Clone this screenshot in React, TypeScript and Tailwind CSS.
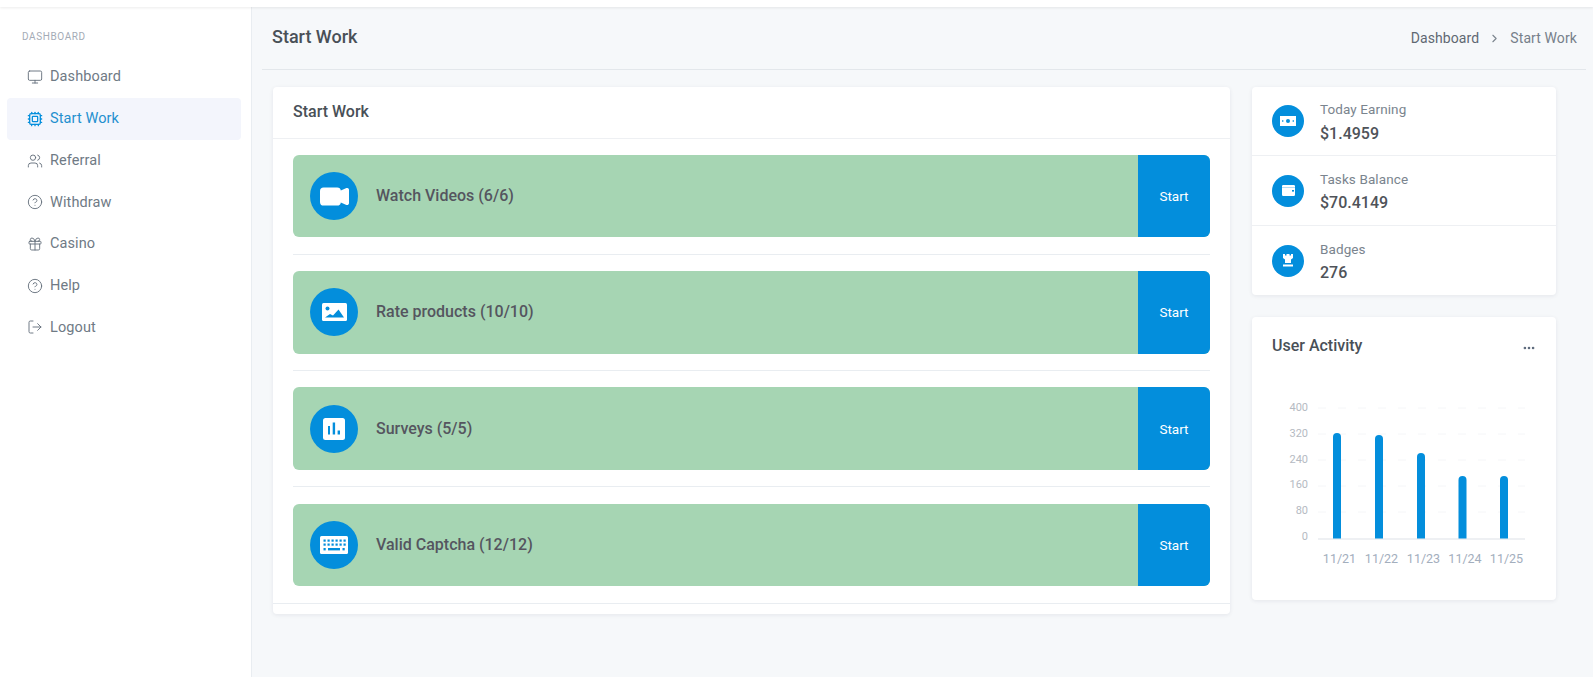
import React from 'react';
import { Monitor, Cpu, Users, CircleHelp, Gift, LogOut, ChevronRight, Ellipsis } from 'lucide-react';
import { BsCameraVideoFill } from 'react-icons/bs';

const BLUE = '#038edc';

const navItems = [
  { label: 'Dashboard', icon: Monitor },
  { label: 'Start Work', icon: Cpu, active: true },
  { label: 'Referral', icon: Users },
  { label: 'Withdraw', icon: CircleHelp },
  { label: 'Casino', icon: Gift },
  { label: 'Help', icon: CircleHelp },
  { label: 'Logout', icon: LogOut },
];

const ImageIcon = () => (
  <svg width="25" height="18" viewBox="0 0 25 18">
    <rect width="25" height="18" rx="1.5" fill="#fff" />
    <circle cx="5.5" cy="5.5" r="2" fill={BLUE} />
    <path d="M3 14.5l5-3.5 3 1.5 5.5-6 5.5 8z" fill={BLUE} />
  </svg>
);

const SurveyIcon = () => (
  <svg width="22" height="22" viewBox="0 0 22 22">
    <rect width="22" height="22" rx="2.5" fill="#fff" />
    <rect x="5" y="8" width="2" height="8.5" fill={BLUE} />
    <rect x="9.7" y="4.5" width="2.4" height="12" fill={BLUE} />
    <rect x="14.6" y="12.5" width="2.4" height="4" fill={BLUE} />
  </svg>
);

const KeyboardIcon = () => (
  <svg width="28" height="18" viewBox="0 0 28 18">
    <rect width="28" height="18" rx="1.5" fill="#fff" />
    {[3.5, 7.5].flatMap((y) =>
      [4, 8, 12, 16, 20, 24].map((x) => (
        <rect key={`${y}-${x}`} x={x - 0.5} y={y} width="2.2" height="2.2" fill={BLUE} />
      )),
    )}
    <rect x="3.5" y="12" width="2.2" height="2.4" fill={BLUE} />
    <rect x="8" y="12" width="12" height="2.4" fill={BLUE} />
    <rect x="22.5" y="12" width="2.2" height="2.4" fill={BLUE} />
  </svg>
);

const CashIcon = () => (
  <svg width="16" height="10" viewBox="0 0 16 10">
    <rect width="16" height="10" fill="#fff" />
    <circle cx="8" cy="5" r="2" fill={BLUE} />
    <rect x="2" y="4.3" width="1.4" height="1.4" fill={BLUE} />
    <rect x="12.6" y="4.3" width="1.4" height="1.4" fill={BLUE} />
  </svg>
);

const WalletIcon = () => (
  <svg width="13" height="11" viewBox="0 0 13 11">
    <path d="M1.2 0H11.8a1.2 1.2 0 0 1 1.2 1.2V9.8a1.2 1.2 0 0 1-1.2 1.2H1.2A1.2 1.2 0 0 1 0 9.8V1.2A1.2 1.2 0 0 1 1.2 0z" fill="#fff" />
    <rect x="0" y="2" width="13" height="0.6" fill={BLUE} opacity="0.5" />
    <rect x="10" y="5" width="2" height="1.6" fill={BLUE} />
  </svg>
);

const RookIcon = () => (
  <svg width="12" height="13" viewBox="0 0 12 13">
    <path d="M1 0h2v1.5h1.5V0h3v1.5H9V0h2v4L9 5.5V9H3V5.5L1 4z" fill="#fff" />
    <rect x="1" y="10.5" width="10" height="2" fill="#fff" />
  </svg>
);

const tasks = [
  { label: 'Watch Videos (6/6)', icon: <BsCameraVideoFill size={29} /> },
  { label: 'Rate products (10/10)', icon: <ImageIcon /> },
  { label: 'Surveys (5/5)', icon: <SurveyIcon /> },
  { label: 'Valid Captcha (12/12)', icon: <KeyboardIcon /> },
];

const stats = [
  { label: 'Today Earning', value: '$1.4959', icon: <CashIcon />, h: 'h-[68px]' },
  { label: 'Tasks Balance', value: '$70.4149', icon: <WalletIcon />, h: 'h-[70px]' },
  { label: 'Badges', value: '276', icon: <RookIcon />, h: 'h-[70px]' },
];

const Sidebar = () => (
  <aside className="w-[252px] shrink-0 bg-white border-r border-[#e9edf1] pt-[23px]">
    <div className="pl-[22px] text-[10px] leading-[13px] tracking-[0.6px] text-[#a4abb6] uppercase">Dashboard</div>
    <nav className="mt-[13.5px] flex flex-col">
      {navItems.map((item) => (
        <a
          key={item.label}
          className={`mx-[7px] w-[234px] h-[41.7px] pl-[20px] flex items-center gap-[7px] rounded text-[14.5px] tracking-[0.1px] ${
            item.active ? 'bg-[#f3f5fc] text-[#2390cf]' : 'text-[#6f7a85]'
          }`}
        >
          <item.icon
            size={16}
            strokeWidth={item.active ? 1.9 : 1.4}
            className={item.active ? 'text-[#038edc]' : 'text-[#66717d]'}
          />
          {item.label}
        </a>
      ))}
    </nav>
  </aside>
);

const TaskRow = ({ label, icon, last }: { label: string; icon: React.ReactNode; last: boolean }) => (
  <div className={last ? 'border-b border-[#e9edf1] py-[16.4px] px-[20px]' : 'border-b border-[#e9edf1] py-[16.4px] mx-[20px]'}>
    <div className="h-[82.5px] flex rounded-md overflow-hidden bg-[#a6d5b3]">
      <div className="flex-1 flex items-center pl-[17px]">
        <div className="w-[48px] h-[48px] rounded-full bg-[#038edc] text-white flex items-center justify-center">
          {icon}
        </div>
        <span className="ml-[18px] text-[16px] font-medium text-[#55555f]">{label}</span>
      </div>
      <div className="w-[72px] bg-[#038edc] text-white text-[13.5px] flex items-center justify-center">Start</div>
    </div>
  </div>
);

const ActivityChart = () => {
  const bars = [
    { x: 85, top: 117, label: '11/21' },
    { x: 127, top: 119, label: '11/22' },
    { x: 169, top: 137, label: '11/23' },
    { x: 210.5, top: 160, label: '11/24' },
    { x: 252, top: 160, label: '11/25' },
  ];
  const yTicks = ['400', '320', '240', '160', '80', '0'];
  return (
    <svg width="300" height="200" viewBox="0 80 300 200" className="block">
      {[92, 118, 144, 170, 196].map((y) => (
        <line key={y} x1="66" x2="273" y1={y} y2={y} stroke="#f5f6f8" strokeDasharray="8 12" />
      ))}
      <line x1="66" x2="273" y1="223" y2="223" stroke="#e9ebef" strokeWidth="1.5" />
      {yTicks.map((t, i) => (
        <text key={t} x="56" y={95 + i * 25.8} textAnchor="end" fontSize="11" fill="#b5bac2" fontFamily="Roboto, sans-serif">
          {t}
        </text>
      ))}
      {bars.map((b) => (
        <g key={b.label}>
          <path d={`M${b.x - 4} 222.5V${b.top + 4}a4 4 0 0 1 8 0V222.5z`} fill={BLUE} />
          <text x={b.x + 2.5} y="247" textAnchor="middle" fontSize="12.5" fill="#a3aebd" fontFamily="Roboto, sans-serif">
            {b.label}
          </text>
        </g>
      ))}
    </svg>
  );
};

export default function App() {
  return (
    <div className="h-screen overflow-hidden flex flex-col bg-[#f6f8fa] font-['Roboto',sans-serif]">
      <div className="h-[7px] shrink-0 bg-white shadow-[0_1px_3px_rgba(0,0,0,0.08)] relative z-10" />
      <div className="flex-1 flex min-h-0">
        <Sidebar />
        <main className="flex-1 min-w-0">
          {/* Page title */}
          <div className="ml-[10px] mr-[7px] h-[63px] border-b border-[#e3e7eb] pl-[10px] pr-[9px] flex items-center justify-between">
            <h1 className="text-[18px] font-medium text-[#495057] mb-[4px]">Start Work</h1>
            <div className="flex items-center text-[14px] tracking-[0.1px] text-[#5f6872]">
              <span>Dashboard</span>
              <ChevronRight size={13} className="mx-[9px] text-[#7b848d]" />
              <span className="text-[#76808a]">Start Work</span>
            </div>
          </div>

          <div className="pl-[21px] pt-[17px] flex items-start">
            <section className="w-[957px] h-[527px] bg-white rounded shadow-[0_1px_4px_rgba(20,30,60,0.08)]">
              <div className="h-[51.5px] border-b border-[#eef0f3] px-[20px] flex items-center text-[16px] font-medium text-[#495057]">
                Start Work
              </div>
              {tasks.map((t, i) => (
                <TaskRow key={t.label} label={t.label} icon={t.icon} last={i === tasks.length - 1} />
              ))}
            </section>

            <div className="ml-[22px] w-[304px] flex flex-col gap-[22px]">
              <section className="bg-white rounded shadow-[0_1px_4px_rgba(20,30,60,0.08)]">
                {stats.map((s, i) => (
                  <div
                    key={s.label}
                    className={`${s.h} px-[20px] flex items-center ${i > 0 ? 'border-t border-[#eef0f3]' : ''}`}
                  >
                    <div className="w-[32px] h-[32px] rounded-full bg-[#038edc] text-white flex items-center justify-center">
                      {s.icon}
                    </div>
                    <div className="ml-[16px] pt-[2px]">
                      <div className="text-[13.5px] leading-[18px] tracking-[0.1px] text-[#7a848e]">{s.label}</div>
                      <div className="mt-[5.5px] text-[16px] leading-[20px] font-medium text-[#4f5359]">{s.value}</div>
                    </div>
                  </div>
                ))}
              </section>

              <section className="h-[283px] bg-white rounded shadow-[0_1px_4px_rgba(20,30,60,0.08)] relative">
                <div className="pl-[20px] pr-[20px] pt-[17px] flex items-center justify-between">
                  <h2 className="text-[16px] font-medium text-[#495057]">User Activity</h2>
                  <Ellipsis size={14} strokeWidth={2.5} className="text-[#5d6a7c] mt-[3px]" />
                </div>
                <div className="mt-[38px]">
                  <ActivityChart />
                </div>
              </section>
            </div>
          </div>
        </main>
      </div>
    </div>
  );
}
